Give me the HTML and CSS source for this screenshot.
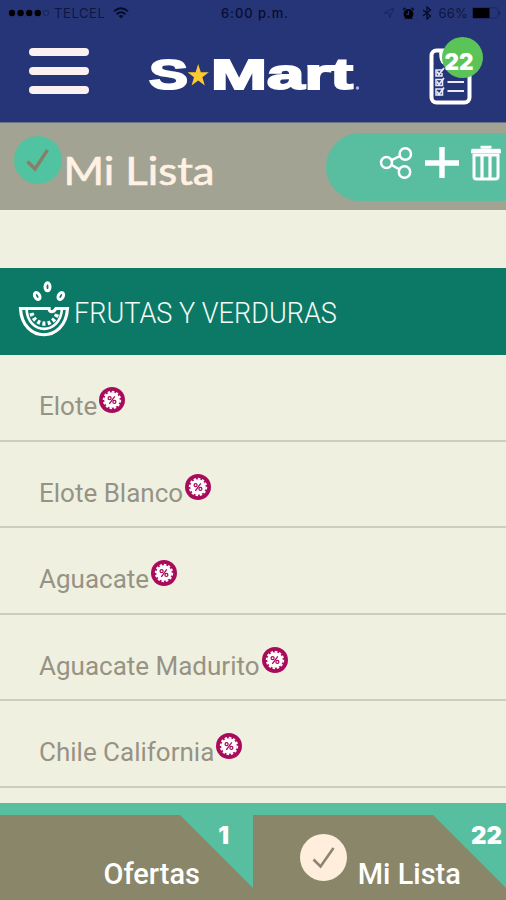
FILE: index.html
```
<!DOCTYPE html>
<html lang="es">
<head>
    <meta charset="UTF-8">
    <meta name="viewport" content="width=device-width, initial-scale=1.0">
    <title>S-Mart - Mi Lista</title>
    <link rel="stylesheet" href="styles.css">
</head>
<body>

    <svg class="sprite" width="0" height="0">
        <symbol id="promo" viewBox="0 0 26 26">
            <circle cx="13" cy="13" r="13" fill="#a90b5b"/>
            <circle cx="13" cy="13" r="7.8" fill="#fff"/>
            <circle cx="13" cy="13" r="8.3" fill="none" stroke="#fff" stroke-width="1.8" stroke-dasharray="2.5 1.8"/>
            <g fill="none" stroke="#a90b5b" stroke-width="1.3">
                <circle cx="10.6" cy="11.2" r="1.5"/>
                <circle cx="15.4" cy="14.9" r="1.5"/>
                <path d="M15.8 9.4L10.3 16.8"/>
            </g>
        </symbol>
    </svg>

    <header class="header">
        <div class="status-bar">
            <div class="status-left">
                <svg width="42" height="12" viewBox="0 0 42 12">
                    <circle cx="4" cy="6" r="3.2"/><circle cx="12.6" cy="6" r="3.2"/><circle cx="21.2" cy="6" r="3.2"/><circle cx="29.8" cy="6" r="3.2"/>
                    <circle cx="38" cy="6" r="2.7" fill="none" stroke="#141c4c" stroke-width=".6"/>
                </svg>
                <span class="carrier">TELCEL</span>
                <svg width="16" height="12" viewBox="0 0 16 12" fill="none" stroke="#060b28" stroke-width="1.9">
                    <path d="M1 4.4Q8-2 15 4.4M3.6 7.2Q8 3.2 12.4 7.2"/>
                    <path d="M5.7 9L8 11.6L10.3 9Q8 7.2 5.7 9Z" fill="#060b28" stroke="none"/>
                </svg>
            </div>
            <span class="clock">6:00 p.m.</span>
            <div class="status-right">
                <svg width="12" height="12" viewBox="0 0 12 12" fill="none" stroke="#18225e"><path d="M1 6L11 1L6.5 11L6 6Z"/></svg>
                <svg width="13" height="13" viewBox="0 0 13 13">
                    <circle cx="6.5" cy="7" r="4.9"/><path d="M1 3L3.5 .8M12 3L9.5 .8M3 12L4 10.5M10 12L9 10.5" stroke="#050822" stroke-width="1.6"/>
                    <path d="M6.5 4V7.3H4" fill="none" stroke="#263577" stroke-width="1.1"/>
                </svg>
                <svg width="10" height="14" viewBox="0 0 10 14" fill="none" stroke="#060b28" stroke-width="1.3"><path d="M1 4L8.5 10L5 13V1L8.5 4L1 10"/></svg>
                <span class="percent">66%</span>
                <svg width="30" height="12" viewBox="0 0 30 12">
                    <rect x=".5" y=".8" width="25.5" height="10.5" rx="1.5" fill="none" stroke="#1a245f" stroke-width=".8"/>
                    <rect x="1" y="1" width="16.5" height="10"/><path d="M27.5 4Q29 6 27.5 8Z"/>
                </svg>
            </div>
        </div>
        <div class="brand-row">
            <div class="menu-button"><span></span><span></span><span></span></div>
            <svg class="logo" width="216" height="54" viewBox="0 -7 216 54">
                <g class="logo-text">
                    <text x="2" y="34" textLength="39" lengthAdjust="spacingAndGlyphs">S</text>
                    <text x="64" y="34" textLength="142" lengthAdjust="spacingAndGlyphs">Mart</text>
                </g>
                <path d="M51.2 9L53.8 17.2H61.8L55.4 22.2L57.8 30.4L51.2 25.5L44.6 30.4L47 22.2L40.6 17.2H48.6Z" fill="#fcc931"/>
                <circle cx="210.5" cy="33" r="1.7" fill="#a9b5df"/>
            </svg>
            <div class="list-counter">
                <svg width="60" height="70" viewBox="0 0 60 70">
                    <rect x="7.5" y="15.5" width="38" height="52" rx="5" fill="none" stroke="#fff" stroke-width="4"/>
                    <g fill="none" stroke="#e9ecf7" stroke-width="1.5">
                        <path d="M18 35H12V41H18V38M12 44.5H18.5V50.5H12ZM12 54H18.5V60H12Z"/>
                        <path d="M13 36.5L15 39.5L20 33M13 46.5L15 49.5L20 43M13 56.5L15 59.5L20 52.5" stroke-width="1.8"/>
                        <path d="M23.5 47H40M23.5 56H40" stroke-width="2.2"/>
                    </g>
                    <path d="M18 15C16.5 18 17 27 21 28" fill="none" stroke="#fff" stroke-width="4"/>
                    <circle cx="38.5" cy="22.5" r="20.5" fill="#5ac458"/>
                    <text x="20.5" y="35" class="count-text" textLength="29" lengthAdjust="spacingAndGlyphs">22</text>
                </svg>
            </div>
        </div>
    </header>

    <div class="title-bar">
        <svg class="title-check" width="48" height="48" viewBox="0 0 48 48">
            <circle cx="24" cy="24" r="24" fill="#51c3a0"/>
            <path d="M13.5 25.5L21 33L33.5 14" fill="none" stroke="#858069" stroke-width="3.4"/>
        </svg>
        <h1><svg width="156" height="52" viewBox="-2 -4 156 52"><text x="-1.5" y="33.5" textLength="151" lengthAdjust="spacingAndGlyphs">Mi Lista</text></svg></h1>
        <div class="actions">
            <svg width="34" height="32" viewBox="0 0 34 32" fill="none" stroke="#fff" stroke-width="2.5">
                <circle cx="7.5" cy="15.5" r="5.5"/><circle cx="26.3" cy="7" r="5.7"/><circle cx="25.5" cy="25" r="5.7"/>
                <path d="M12.6 13.2L21 9M12.6 18L20.5 22.3"/>
            </svg>
            <svg width="34" height="32" viewBox="0 0 34 32"><path d="M17 0V31M0 16H34" stroke="#fff" stroke-width="5.4"/></svg>
            <svg class="trash" width="32" height="36" viewBox="0 0 32 36" fill="none" stroke="#fff" stroke-width="3">
                <path d="M1 6.8H31M12 3.4V2.2H20V3.4"/><path d="M1.5 5.5H30.5" stroke-width="3.4"/>
                <path d="M4 10V31.5Q4 34 6.5 34H25.5Q28 34 28 31.5V10Z"/>
                <path d="M12 11V33M20 11V33" stroke-width="3.2"/>
            </svg>
        </div>
    </div>

    <main class="list">
        <div class="category">
            <svg width="52" height="58" viewBox="0 0 52 58" fill="none" stroke="#fff" stroke-width="3.2">
                <path d="M2.5 28.5H31Q31 33 36 31L38 28.5H49.5C47.5 63.5 4 63.5 2.5 28.5Z"/>
                <path d="M8.5 29C10 55.5 42 55.5 44 29" stroke-width="2.6"/>
                <path d="M13.5 33C17 46.5 35 47.5 39 34" stroke-width="4.2" stroke-dasharray="3 2.3"/>
                <g stroke-width="3">
                    <ellipse cx="29.5" cy="6.8" rx="2.5" ry="4"/>
                    <ellipse cx="19.2" cy="16" rx="2.4" ry="3.8" transform="rotate(-30 19.2 16)"/>
                    <ellipse cx="42.8" cy="16" rx="2.4" ry="3.8" transform="rotate(30 42.8 16)"/>
                </g>
            </svg>
            <h2>FRUTAS Y VERDURAS</h2>
        </div>
        <ul>
            <li><span>Elote</span><svg><use href="#promo"/></svg></li>
            <li><span>Elote Blanco</span><svg><use href="#promo"/></svg></li>
            <li><span>Aguacate</span><svg><use href="#promo"/></svg></li>
            <li><span>Aguacate Madurito</span><svg><use href="#promo"/></svg></li>
            <li><span>Chile California</span><svg><use href="#promo"/></svg></li>
        </ul>
    </main>

    <nav class="tabs">
        <div class="tab">
            <span class="tab-count one">1</span>
            <span class="tab-label offers">Ofertas</span>
        </div>
        <div class="tab">
            <span class="tab-count">22</span>
            <svg class="tab-check" width="47" height="47" viewBox="0 0 47 47">
                <circle cx="23.5" cy="23.5" r="23.5" fill="#feeedb"/>
                <path d="M13.5 25.5L20.5 32.5L33.5 14" fill="none" stroke="#8b8670" stroke-width="2.6"/>
            </svg>
            <span class="tab-label">Mi Lista</span>
        </div>
    </nav>

</body>
</html>
```

FILE: styles.css
```
* {
    box-sizing: border-box;
}

body {
    margin: 0;
    height: 900px;
    display: flex;
    flex-direction: column;
    overflow: hidden;
    background-color: #f0f0e1;
    font-family: Roboto, "Liberation Sans", sans-serif;
}

svg {
    display: block;
    flex: none;
}

.sprite {
    position: absolute;
}

/* Header */
.header {
    height: 123px;
    flex: none;
    background-color: #263577;
    border-bottom: 1px solid #6d728d;
}

.status-bar {
    height: 26px;
    padding: 0 7px 0 8px;
    display: grid;
    grid-template-columns: 1fr auto 1fr;
    align-items: center;
    font-family: Inter, sans-serif;
    font-size: 13px;
    color: #080d2d;
}

.status-left,
.status-right {
    display: flex;
    align-items: center;
}

.carrier {
    margin: 0 8px 0 4px;
    letter-spacing: 0.6px;
    color: #0e1642;
}

.clock {
    padding-left: 3px;
    font-weight: 500;
    letter-spacing: 0.9px;
}

.status-right {
    justify-content: flex-end;
    gap: 7px;
}

.percent {
    letter-spacing: 0.2px;
    color: #0e1642;
}

.status-right svg:last-child {
    margin: 0 -3px 0 -3px;
}

.brand-row {
    height: 96px;
    padding: 0 18px 0 29px;
    display: flex;
    align-items: flex-start;
}

.menu-button {
    width: 60px;
    margin-top: 22px;
    display: flex;
    flex-direction: column;
    gap: 11px;
}

.menu-button span {
    height: 8px;
    border-radius: 4px;
    background-color: #faf1f0;
}

.logo {
    margin: 22px 0 0 58px;
}

.logo-text {
    font-family: "Liberation Sans", sans-serif;
    font-size: 43px;
    font-weight: 700;
    fill: #fff;
    stroke: #fff;
    stroke-width: 2px;
}

.list-counter {
    margin: 9px 0 0 auto;
    width: 64px;
}

.count-text {
    font-family: Inter, sans-serif;
    font-size: 23px;
    font-weight: 900;
    fill: #fff;
}

/* Title bar */
.title-bar {
    height: 87px;
    flex: none;
    padding-left: 14px;
    display: flex;
    align-items: flex-start;
    background-color: #a3a393;
}

.title-check {
    margin-top: 13px;
}

.title-bar h1 {
    margin: 24px 0 0 1px;
    font-family: Lato, sans-serif;
    font-size: 38px;
    font-weight: 400;
}

.title-bar h1 text {
    fill: #fff1e4;
    stroke: #fff1e4;
    stroke-width: 0.7px;
}

.actions {
    width: 180px;
    height: 68px;
    margin: 10px 0 0 auto;
    padding: 14px 4px 0 53px;
    display: flex;
    gap: 12px;
    border-radius: 34px 0 0 34px;
    background-color: #59bea0;
}

.trash {
    margin: -2px 0 0 -1px;
}

/* Shopping list */
.list {
    flex: 1;
    min-height: 0;
    padding-top: 58px;
}

.category {
    height: 87px;
    padding: 12px 0 0 18px;
    display: flex;
    background-color: #0c7966;
    color: #f3fbf7;
}

.category h2 {
    margin: 13px 0 0 4px;
    font-size: 30px;
    line-height: 40px;
    font-weight: 350;
    white-space: nowrap;
    transform: scaleX(0.903);
    transform-origin: left;
}

.list ul {
    margin: 0;
    padding: 0;
    list-style: none;
}

.list li {
    height: 86.6px;
    padding: 31px 0 0 39px;
    display: flex;
    align-items: flex-start;
    border-bottom: 2px solid #cccdc0;
    color: #969385;
    font-size: 26px;
    line-height: 40px;
}

.list li svg {
    width: 26px;
    height: 26px;
    margin: 1px 0 0 2px;
}

/* Bottom tabs */
.tabs {
    height: 97px;
    flex: none;
    padding-top: 12px;
    display: grid;
    grid-template-columns: 1fr 1fr;
    background-color: #57bea0;
}

.tab {
    position: relative;
    display: flex;
    justify-content: flex-end;
    background-color: #8a8669;
}

/* folded corner behind the counter */
.tab::before {
    content: '';
    position: absolute;
    top: 0;
    right: 0;
    width: 73px;
    height: 73px;
    background-color: #57bea0;
    clip-path: polygon(0 0, 100% 0, 100% 100%);
}

.tab-count {
    position: absolute;
    top: 7px;
    right: 4px;
    color: #fff;
    font-family: Inter, sans-serif;
    font-size: 24px;
    font-weight: 900;
    line-height: 28px;
}

.tab-count.one {
    right: 24px;
}

.tab-check {
    margin: 19px 7px 0 0;
}

.tab-label {
    margin: 39px 45px 0 0;
    color: #fff;
    font-size: 30px;
    font-weight: 500;
    line-height: 40px;
    transform: scaleX(0.965);
    transform-origin: right;
}

.tab-label.offers {
    margin-right: 53px;
}
```
